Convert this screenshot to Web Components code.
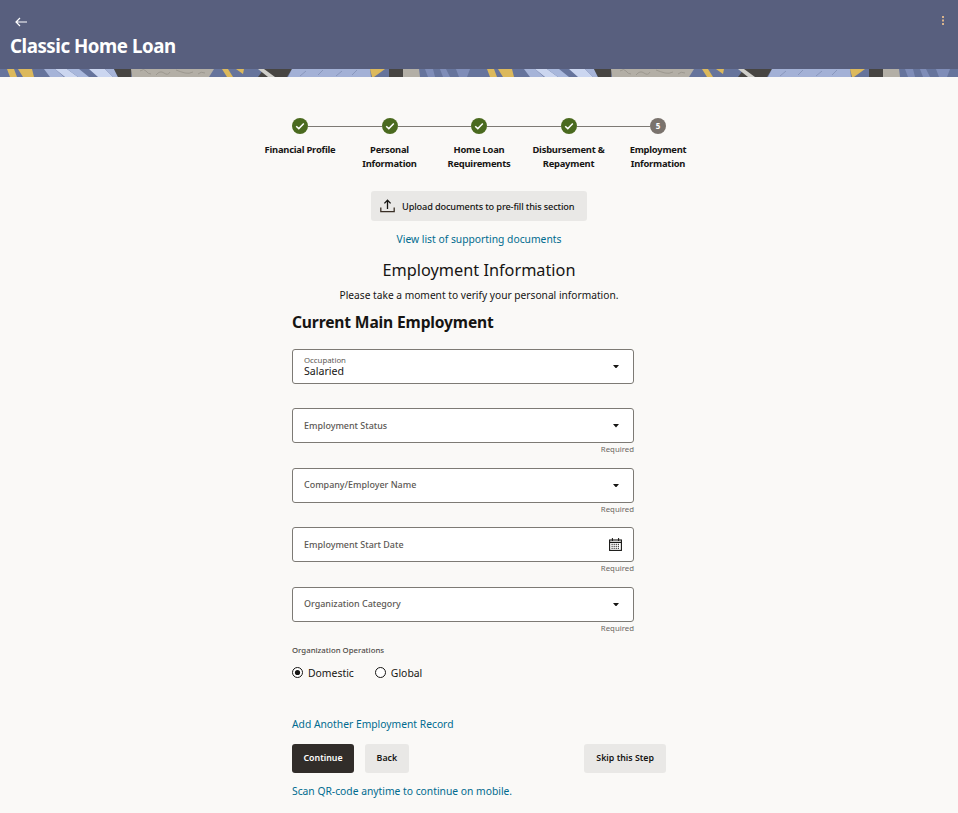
<!DOCTYPE html>
<html lang="en">
<head>
<meta charset="utf-8">
<title>Classic Home Loan</title>
<style>
  html, body { margin: 0; padding: 0; background: #faf9f7; }
  body { font-family: "Noto Sans", "Liberation Sans", sans-serif; color: #161513; }
</style>
</head>
<body>
<app-header heading="Classic Home Loan"></app-header>
<loan-page>
  <step-tracker>
    <tracker-step done>Financial Profile</tracker-step>
    <tracker-step done>Personal<br>Information</tracker-step>
    <tracker-step done>Home Loan<br>Requirements</tracker-step>
    <tracker-step done>Disbursement &amp;<br>Repayment</tracker-step>
    <tracker-step number="5">Employment<br>Information</tracker-step>
  </step-tracker>
  <upload-button>Upload documents to pre-fill this section</upload-button>
  <a-link class="docs">View list of supporting documents</a-link>
  <section-heading sub="Please take a moment to verify your personal information.">Employment Information</section-heading>
  <form-area>
    <span slot="title">Current Main Employment</span>
    <form-field label="Occupation" value="Salaried"></form-field>
    <form-field label="Employment Status" required></form-field>
    <form-field label="Company/Employer Name" required></form-field>
    <form-field label="Employment Start Date" icon="calendar" required></form-field>
    <form-field label="Organization Category" required></form-field>
    <radio-group label="Organization Operations">
      <radio-option checked>Domestic</radio-option>
      <radio-option>Global</radio-option>
    </radio-group>
    <a-link>Add Another Employment Record</a-link>
    <action-row>
      <app-button primary>Continue</app-button>
      <app-button>Back</app-button>
      <app-button slot="end">Skip this Step</app-button>
    </action-row>
    <a-link>Scan QR-code anytime to continue on mobile.</a-link>
  </form-area>
</loan-page>

<script>
const FONT = '"Noto Sans", "Liberation Sans", sans-serif';

class AppHeader extends HTMLElement {
  connectedCallback() {
    this.attachShadow({ mode: 'open' });
    this.shadowRoot.innerHTML = `
      <style>
        :host { display: block; font-family: ${FONT}; }
        .bar { background: #585f7e; height: 69px; padding: 0 10px; box-sizing: border-box; display: flex; flex-direction: column; }
        .top { display: flex; justify-content: space-between; height: 35px; align-items: flex-start; }
        .back { margin: 17px 0 0 5px; display: block; }
        .more { margin: 16px 3px 0 0; display: block; }
        h1 { margin: 0; font-size: 18.7px; line-height: 22px; font-weight: 700; color: #fff; letter-spacing: -.45px; }
        svg.strip { display: block; width: 100%; height: 8px; }
      </style>
      <div class="bar">
        <div class="top">
          <svg class="back" width="12" height="10" viewBox="0 0 12 10"><path d="M12 5H1M5 1 1 5l4 4" fill="none" stroke="#fff" stroke-width="1.2"/></svg>
          <svg class="more" width="4" height="9" viewBox="0 0 4 9"><g fill="#d9b48c"><rect x="1" y="0" width="2" height="2"/><rect x="1" y="3.5" width="2" height="2"/><rect x="1" y="7" width="2" height="2"/></g></svg>
        </div>
        <h1>${this.getAttribute('heading')}</h1>
      </div>
      <svg class="strip" aria-hidden="true">
        <defs>
          <pattern id="art" width="480" height="8" patternUnits="userSpaceOnUse">
            <rect width="480" height="8" fill="#66749c"/>
            <path d="M7 0h7l3 8H10z M18 0h14l2 8H23z" fill="#dcb95c"/>
            <path d="M44 0h11l9 8H50z" fill="#a6b4d8"/>
            <path d="M55 0h12l11 8H65z" fill="#cbd6f0"/>
            <path d="M67 0h12l10 8H78z" fill="#a9b8dc"/>
            <path d="M89 0h16l8 8H98z" fill="#cbd6f0"/>
            <path d="M105 0h9l4 8h-5z" fill="#a6b4d8"/>
            <path d="M114 0h18l-1 8h-13z" fill="#474542"/>
            <path d="M131 0h83l-5 8h-77z" fill="#b3afa6"/>
            <path d="M140 2q4-3 6 0t5 3M156 6q4-5 8-2t6-1M176 1q5 2 9 3t8-1M198 5q3-3 7-1" fill="none" stroke="#9c988f" stroke-width="1"/>
            <path d="M222 0h6l5 8h-6z M236 0h8l-1 5z" fill="#dcb95c"/>
            <path d="M258 8l6-8h28l-5 8z" fill="#474542"/>
            <path d="M258 0h6l11 8h-7z" fill="#d0cfca"/>
            <path d="M292 0h78l1 8h-83z" fill="#a3b1d6"/>
            <path d="M300 7l6-5M318 6l5-5M336 7l6-5M352 6l5-5" stroke="#8997bc" stroke-width="1"/>
            <path d="M370 0h15l-11 8h-2z" fill="#dcb95c"/>
            <path d="M389 0h14v8h-14z" fill="#474542"/>
            <path d="M403 0h16l1 8h-17z" fill="#b3afa6"/>
            <path d="M425 0h8l2 8h-7z M440 0h6l4 8h-7z M456 0h14l-3 8h-8z" fill="#7f8db8"/>
          </pattern>
        </defs>
        <rect width="100%" height="8" fill="url(#art)"/>
      </svg>`;
  }
}

class LoanPage extends HTMLElement {
  constructor() {
    super();
    this.attachShadow({ mode: 'open' }).innerHTML = `
      <style>
        :host { display: flex; flex-direction: column; align-items: center; font-family: ${FONT}; padding-top: 41px; }
      </style>
      <slot></slot>`;
  }
}

class StepTracker extends HTMLElement {
  constructor() {
    super();
    this.attachShadow({ mode: 'open' }).innerHTML = `
      <style>
        :host { display: grid; grid-template-columns: repeat(5, 89.5px); height: 73px; }
      </style>
      <slot></slot>`;
  }
}

class TrackerStep extends HTMLElement {
  connectedCallback() {
    const done = this.hasAttribute('done');
    const first = !this.previousElementSibling;
    const last = !this.nextElementSibling;
    const mark = done
      ? `<svg width="10" height="8" viewBox="0 0 10 8"><path d="M1.2 4.2 3.8 6.6 8.8 1.4" fill="none" stroke="#fff" stroke-width="1.5"/></svg>`
      : `<span class="num">${this.getAttribute('number')}</span>`;
    this.attachShadow({ mode: 'open' }).innerHTML = `
      <style>
        :host { display: block; font-size: 9.4px; line-height: 14px; font-weight: 700; text-align: center; color: #161513; letter-spacing: -.23px; }
        .head { display: flex; align-items: center; height: 16px; margin-bottom: 9px; }
        .line { flex: 1; height: 1px; background: #7d7a75; }
        .line.off { background: none; }
        .dot { width: 16px; height: 16px; border-radius: 50%; display: flex; align-items: center; justify-content: center; background: ${done ? '#4a6a1f' : '#7a736d'}; }
        .num { color: #fff; font-size: 8px; line-height: 16px; }
      </style>
      <div class="head">
        <i class="line ${first ? 'off' : ''}"></i>
        <span class="dot">${mark}</span>
        <i class="line ${last ? 'off' : ''}"></i>
      </div>
      <slot></slot>`;
  }
}

class UploadButton extends HTMLElement {
  constructor() {
    super();
    this.attachShadow({ mode: 'open' }).innerHTML = `
      <style>
        :host { display: flex; align-items: center; gap: 7px; box-sizing: border-box; width: 216px; height: 30px; padding-left: 9px; background: #e9e8e6; border-radius: 3px; font-size: 9.2px; font-weight: 500; letter-spacing: -.14px; color: #161513; white-space: nowrap; }
        svg { flex: none; }
      </style>
      <svg width="15" height="14" viewBox="0 0 15 14"><path d="M.8 8.5v4.2h13.4V8.5" fill="none" stroke="#3a2f26" stroke-width="1.3"/><path d="M7.5 10V1.2M4.4 4.4l3.1-3.2 3.1 3.2" fill="none" stroke="#161513" stroke-width="1.3"/></svg>
      <slot></slot>`;
  }
}

class ALink extends HTMLElement {
  constructor() {
    super();
    this.attachShadow({ mode: 'open' }).innerHTML = `
      <style>
        :host { display: block; font-size: 10.3px; line-height: 16px; color: #006b8f; white-space: nowrap; }
        :host(.docs) { margin-top: 10px; }
      </style>
      <slot></slot>`;
  }
}

class SectionHeading extends HTMLElement {
  connectedCallback() {
    this.attachShadow({ mode: 'open' }).innerHTML = `
      <style>
        :host { display: block; text-align: center; margin-top: 11px; }
        h2 { margin: 0; font-size: 16.3px; line-height: 24px; font-weight: 400; color: #161513; }
        p { margin: 6px 0 0; font-size: 10.2px; line-height: 15px; color: #161513; }
      </style>
      <h2><slot></slot></h2>
      <p>${this.getAttribute('sub')}</p>`;
  }
}

class FormArea extends HTMLElement {
  constructor() {
    super();
    this.attachShadow({ mode: 'open' }).innerHTML = `
      <style>
        :host { display: block; width: 374px; margin-top: 8px; }
        h3 { margin: 0 0 15.9px; font-size: 15.6px; line-height: 22px; font-weight: 700; letter-spacing: -.15px; color: #161513; }
      </style>
      <h3><slot name="title"></slot></h3>
      <slot></slot>`;
  }
}

class FormField extends HTMLElement {
  connectedCallback() {
    const value = this.getAttribute('value');
    const icon = this.getAttribute('icon') === 'calendar'
      ? `<svg width="13" height="13" viewBox="0 0 13 13"><rect x=".6" y="2" width="11.8" height="10.4" fill="none" stroke="#161513" stroke-width="1.1"/><path d="M.6 4.4h11.8" stroke="#161513" stroke-width="1.2"/><path d="M3.4 0v3M9.6 0v3" stroke="#161513" stroke-width="1"/><path d="M2.5 6.3h8M2.5 8.3h8M2.5 10.3h8" stroke="#161513" stroke-width="1" stroke-dasharray="1.2 .9"/></svg>`
      : `<svg width="6" height="3.5" viewBox="0 0 6 3.5"><path d="M0 0h6L3 3.5z" fill="#161513"/></svg>`;
    this.attachShadow({ mode: 'open' }).innerHTML = `
      <style>
        :host { display: block; width: 342px; height: 59.5px; }
        .box { box-sizing: border-box; height: 35px; display: flex; align-items: center; justify-content: space-between; padding: 0 11px; background: #fff; border: 1px solid #7d7a75; border-radius: 3px; }
        .label { display: block; font-size: 8.95px; line-height: 12px; font-weight: 500; color: #5c5854; }
        .filled .label { font-size: 7.8px; line-height: 9px; font-weight: 400; }
        .value { display: block; font-size: 10.6px; line-height: 12px; color: #161513; }
        .req { font-size: 7.8px; line-height: 12px; text-align: right; color: #6b6763; }
        .icon { display: flex; align-items: center; justify-content: center; width: 13px; }
      </style>
      <div class="box ${value ? 'filled' : ''}">
        <div class="text">
          <span class="label">${this.getAttribute('label')}</span>
          ${value ? `<span class="value">${value}</span>` : ''}
        </div>
        <span class="icon">${icon}</span>
      </div>
      ${this.hasAttribute('required') ? '<div class="req">Required</div>' : ''}`;
  }
}

class RadioGroup extends HTMLElement {
  connectedCallback() {
    this.attachShadow({ mode: 'open' }).innerHTML = `
      <style>
        :host { display: block; height: 69.5px; }
        .label { font-size: 7.8px; line-height: 9px; font-weight: 500; color: #4f4b47; margin-bottom: 10.5px; }
        .opts { display: flex; gap: 21px; }
      </style>
      <div class="label">${this.getAttribute('label')}</div>
      <div class="opts"><slot></slot></div>`;
  }
}

class RadioOption extends HTMLElement {
  connectedCallback() {
    const on = this.hasAttribute('checked');
    this.attachShadow({ mode: 'open' }).innerHTML = `
      <style>
        :host { display: flex; align-items: center; gap: 5px; font-size: 10.4px; line-height: 14px; color: #161513; }
      </style>
      <svg width="11" height="11" viewBox="0 0 11 11"><circle cx="5.5" cy="5.5" r="5" fill="#fff" stroke="#161513"/>${on ? '<circle cx="5.5" cy="5.5" r="2.6" fill="#161513"/>' : ''}</svg>
      <slot></slot>`;
  }
}

class ActionRow extends HTMLElement {
  constructor() {
    super();
    this.attachShadow({ mode: 'open' }).innerHTML = `
      <style>
        :host { display: flex; justify-content: space-between; margin: 12px 0 10px; }
        .start { display: flex; gap: 11px; }
      </style>
      <div class="start"><slot></slot></div>
      <slot name="end"></slot>`;
  }
}

class AppButton extends HTMLElement {
  constructor() {
    super();
    this.attachShadow({ mode: 'open' }).innerHTML = `
      <style>
        :host { display: flex; align-items: center; height: 29px; padding: 0 11.5px; border-radius: 3px; background: #e9e8e6; color: #161513; font-size: 8.8px; font-weight: 600; white-space: nowrap; }
        :host([primary]) { background: #312d2a; color: #fff; }
        :host([slot=end]) { padding: 0 12px; }
      </style>
      <slot></slot>`;
  }
}

customElements.define('app-header', AppHeader);
customElements.define('loan-page', LoanPage);
customElements.define('step-tracker', StepTracker);
customElements.define('tracker-step', TrackerStep);
customElements.define('upload-button', UploadButton);
customElements.define('a-link', ALink);
customElements.define('section-heading', SectionHeading);
customElements.define('form-area', FormArea);
customElements.define('form-field', FormField);
customElements.define('radio-group', RadioGroup);
customElements.define('radio-option', RadioOption);
customElements.define('action-row', ActionRow);
customElements.define('app-button', AppButton);
</script>
</body>
</html>
